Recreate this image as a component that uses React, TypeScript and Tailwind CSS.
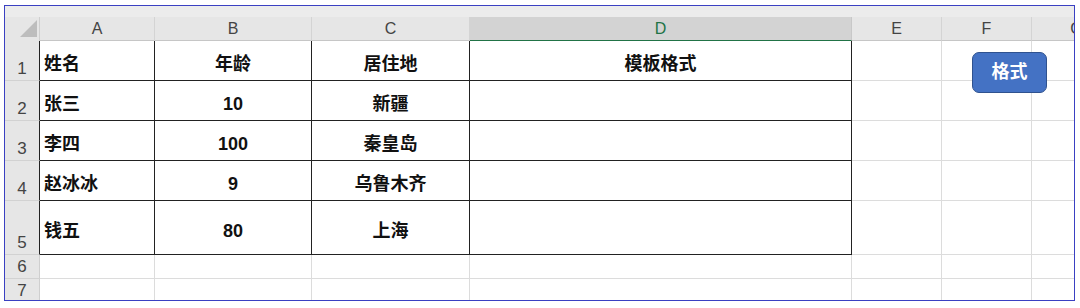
import React from 'react'

const cols = [
  { key: 'A', w: 115 },
  { key: 'B', w: 157 },
  { key: 'C', w: 158 },
  { key: 'D', w: 382 },
  { key: 'E', w: 90 },
  { key: 'F', w: 90 },
  { key: 'G', w: 90 },
]

const rows: { n: number; h: number; cells: string[] }[] = [
  { n: 1, h: 40, cells: ['姓名', '年龄', '居住地', '模板格式'] },
  { n: 2, h: 40, cells: ['张三', '10', '新疆', ''] },
  { n: 3, h: 40, cells: ['李四', '100', '秦皇岛', ''] },
  { n: 4, h: 40, cells: ['赵冰冰', '9', '乌鲁木齐', ''] },
  { n: 5, h: 54, cells: ['钱五', '80', '上海', ''] },
  { n: 6, h: 24, cells: [] },
  { n: 7, h: 24, cells: [] },
]

const font = { fontFamily: '"Liberation Sans", "Noto Sans CJK SC", sans-serif' }

export default function App() {
  return (
    <div className="w-[1080px] h-[308px] bg-white pl-[4px] pt-[5px]" style={font}>
      <div className="relative w-[1071px] h-[296px] border border-[#3a40c2] overflow-hidden bg-white">
        {/* 顶部灰条 */}
        <div className="h-[11px] bg-[#ececec]" />

        {/* 列标题 */}
        <div className="flex h-[24px]">
          <div className="w-[35px] shrink-0 bg-[#e6e6e6] border-r border-[#cfcfcf] relative">
            <svg className="absolute left-[15px] top-[3px]" width="17" height="17" viewBox="0 0 17 17">
              <polygon points="0,17 17,17 17,0" fill="#bdbdbd" />
            </svg>
          </div>
          {cols.map(c => (
            <div
              key={c.key}
              style={{ width: c.w }}
              className={
                c.key === 'D'
                  ? 'shrink-0 flex items-center justify-center pt-[1px] bg-[#d3d3d3] border-r border-[#c8c8c8] border-b border-b-[#217346] text-[16px] text-[#217346]'
                  : 'shrink-0 flex items-center justify-center pt-[1px] bg-[#e6e6e6] border-r border-[#d4d4d4] border-b border-b-[#c6c6c6] text-[16px] text-[#444]'
              }
            >
              {c.key}
            </div>
          ))}
        </div>

        {/* 数据行 */}
        {rows.map(r => {
          const inTable = r.n <= 5
          return (
            <div key={r.n} className="flex" style={{ height: r.h }}>
              <div
                className={
                  'w-[35px] shrink-0 bg-[#e6e6e6] border-b border-[#d2d2d2] flex items-end justify-center pb-[1px] text-[17px] leading-[20px] text-[#444] border-r ' +
                  (inTable ? 'border-r-[#222]' : 'border-r-[#cfcfcf]')
                }
              >
                {r.n}
              </div>
              {cols.map((c, i) => {
                const dark = inTable && i < 4
                const text = r.cells[i] ?? ''
                return (
                  <div
                    key={c.key}
                    style={{ width: c.w }}
                    className={
                      'shrink-0 flex items-center pt-[6px] text-[18px] leading-[24px] font-bold text-[#111] border-r border-b ' +
                      (dark ? 'border-r-[#222] border-b-[#222] ' : 'border-r-[#dcdcdc] border-b-[#dcdcdc] ') +
                      (i === 0 ? 'justify-start pl-[4px]' : 'justify-center')
                    }
                  >
                    {dark ? text : ''}
                  </div>
                )
              })}
            </div>
          )
        })}

        {/* 按钮 */}
        <button className="absolute left-[967px] top-[46px] w-[75px] h-[41px] rounded-[7px] bg-[#4472c4] border border-[#2f528f] text-white text-[18px] font-bold flex items-center justify-center">
          格式
        </button>
      </div>
    </div>
  )
}
